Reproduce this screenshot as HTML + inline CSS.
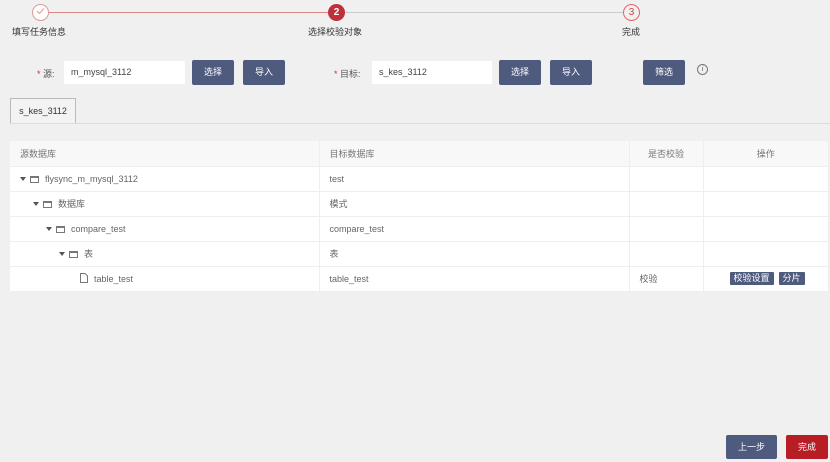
<!DOCTYPE html>
<html><head><meta charset="utf-8"><style>
*{margin:0;padding:0;box-sizing:border-box}
body{width:830px;height:462px;background:#f0f0f0;font-family:"Liberation Sans","Noto Sans CJK SC",sans-serif;font-size:9px;color:#444;position:relative;overflow:hidden}
.a{position:absolute}
.c{border-radius:50%;width:17px;height:17px;text-align:center;line-height:15px;font-size:10px}
.btn{position:absolute;background:#4e5a7e;color:#fff;text-align:center;border-radius:2px;height:25px;line-height:25px;font-size:9px}
.inp{position:absolute;background:#fff;height:23px;line-height:23px;padding-left:7px;font-size:9px;color:#444}
table{position:absolute;left:10px;top:141px;width:819px;border-collapse:collapse;background:#fff}
td{height:25px;border:1px solid #eee;border-left:none;border-top:none;font-size:9px;color:#666;padding-left:10px}
tr.h td{background:#f8f8f8;color:#777}
.tri{display:inline-block;width:0;height:0;border-left:3px solid transparent;border-right:3px solid transparent;border-top:4px solid #555;margin-right:4px;vertical-align:1px}
.box{display:inline-block;width:9px;height:7px;border:1px solid #777;border-top-width:2px;margin-right:6px;vertical-align:-1px}
.sb{display:inline-block;background:#4e5a7e;color:#fff;padding:0 4px;height:13px;line-height:13px;margin-right:5px;border-radius:1px}
</style></head><body>
<div class="a" style="left:48px;top:12px;width:280px;height:1px;background:#d88"></div>
<div class="a" style="left:345px;top:12px;width:278px;height:1px;background:#ccc"></div>
<div class="a c" style="left:32px;top:4px;border:1px solid #d99;background:#fff"><svg width="11" height="11" viewBox="0 0 11 11"><path d="M2 6l2.5 2.5L9 3.5" stroke="#d99" fill="none" stroke-width="1"/></svg></div>
<div class="a c" style="left:328px;top:4px;background:#c0303a;color:#fff;line-height:17px;font-weight:bold">2</div>
<div class="a c" style="left:623px;top:4px;border:1px solid #d66;color:#c44;background:#f0f0f0">3</div>
<div class="a" style="left:12px;top:25px;color:#333">填写任务信息</div>
<div class="a" style="left:308px;top:25px;color:#333">选择校验对象</div>
<div class="a" style="left:622px;top:25px;color:#333">完成</div>

<div class="a" style="left:37px;top:67px;color:#555"><span style="color:#c33">*</span> 源:</div>
<div class="inp" style="left:64px;top:61px;width:121px">m_mysql_3112</div>
<div class="btn" style="left:192px;top:60px;width:42px">选择</div>
<div class="btn" style="left:243px;top:60px;width:42px">导入</div>
<div class="a" style="left:334px;top:67px;color:#555"><span style="color:#c33">*</span> 目标:</div>
<div class="inp" style="left:372px;top:61px;width:120px">s_kes_3112</div>
<div class="btn" style="left:499px;top:60px;width:42px">选择</div>
<div class="btn" style="left:550px;top:60px;width:42px">导入</div>
<div class="btn" style="left:643px;top:60px;width:42px">筛选</div>
<div class="a" style="left:697px;top:64px;width:11px;height:11px;border:1px solid #777;border-radius:50%;font-size:7px;text-align:center;line-height:9px;font-style:italic;color:#555">i</div>

<div class="a" style="left:10px;top:98px;width:66px;height:26px;border:1px solid #bbb;border-bottom:none;background:#f3f3f3;text-align:center;line-height:25px;color:#333">s_kes_3112</div>
<div class="a" style="left:10px;top:123px;width:820px;height:1px;background:#ddd"></div>

<table>
<tr class="h"><td style="width:309px">源数据库</td><td style="width:310px">目标数据库</td><td style="width:74px;text-align:center;padding:0">是否校验</td><td style="text-align:center;padding:0">操作</td></tr>
<tr><td><span class="tri"></span><span class="box"></span>flysync_m_mysql_3112</td><td>test</td><td></td><td></td></tr>
<tr><td style="padding-left:23px"><span class="tri"></span><span class="box"></span>数据库</td><td>模式</td><td></td><td></td></tr>
<tr><td style="padding-left:36px"><span class="tri"></span><span class="box"></span>compare_test</td><td>compare_test</td><td></td><td></td></tr>
<tr><td style="padding-left:49px"><span class="tri"></span><span class="box"></span>表</td><td>表</td><td></td><td></td></tr>
<tr><td style="padding-left:70px"><svg width="8" height="10" style="vertical-align:-1px;margin-right:6px"><path d="M.5 .5h4.5l2.5 2.5v6.5h-7z" fill="none" stroke="#777"/></svg>table_test</td><td>table_test</td><td>校验</td><td style="padding-left:26px"><span class="sb">校验设置</span><span class="sb">分片</span></td></tr>
</table>

<div class="btn" style="left:726px;top:435px;width:51px;height:24px;line-height:24px">上一步</div>
<div class="btn" style="left:786px;top:435px;width:42px;height:24px;line-height:24px;background:#b81c25">完成</div>
</body></html>
